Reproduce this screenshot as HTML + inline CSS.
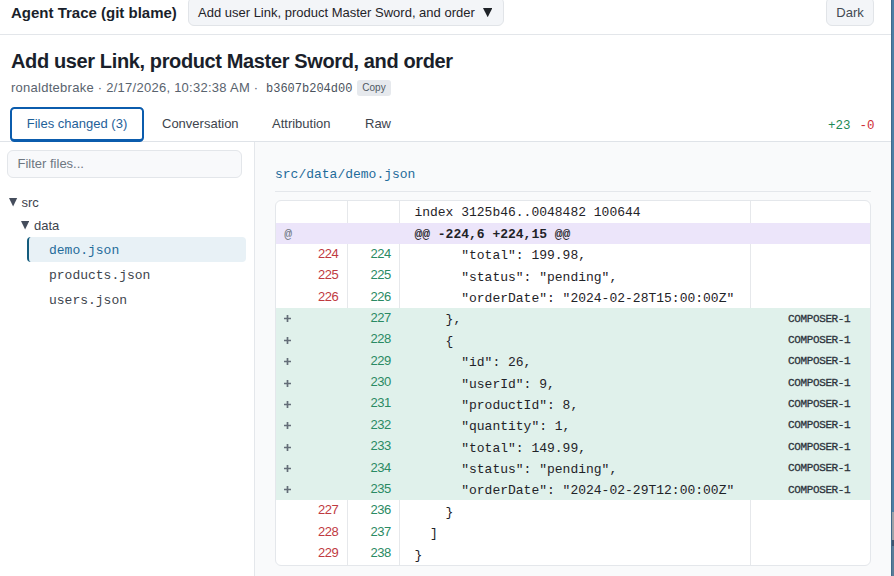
<!DOCTYPE html>
<html><head><meta charset="utf-8">
<style>
*{box-sizing:border-box;margin:0;padding:0}
html,body{width:894px;height:576px;overflow:hidden;background:#fff;font-family:"Liberation Sans",sans-serif;color:#1f2328}
.abs{position:absolute}
.mono{font-family:"Liberation Mono",monospace}
#strip{position:absolute;left:891px;top:0;width:3px;height:576px;border-left:1px solid #41698a;background:linear-gradient(#4d7fa5 0,#4d7fa5 512px,#9da2a7 512px,#9da2a7 540px,#41556e 540px,#41556e 546px,#5a7d98 546px)}
#hdr{position:absolute;left:0;top:0;width:891px;height:35px;border-bottom:1px solid #e3e6ea;background:#fff}
#brand{position:absolute;left:11px;top:1.6px;font-weight:bold;font-size:15px;line-height:22px;color:#1a1f2b}
#dd{position:absolute;left:188px;top:-3px;width:316px;height:28.6px;background:#f3f5f8;border:1px solid #e1e4e8;border-radius:6px;font-size:13px;line-height:27px;padding-top:1.3px;padding-left:9px;color:#1f2328}
#dark{position:absolute;left:826px;top:-3px;width:48px;height:28.6px;background:#f3f5f8;border:1px solid #e1e4e8;border-radius:6px;font-size:13px;line-height:27px;padding-top:1.3px;text-align:center;color:#424a53}
#title{position:absolute;left:11px;top:47.6px;font-weight:bold;font-size:20px;line-height:26px;letter-spacing:-0.375px;color:#1a1f2b}
#meta{position:absolute;left:11px;top:79.5px;font-size:13px;letter-spacing:0.26px;line-height:16px;color:#59636e;white-space:pre}
#hash{position:absolute;left:266px;top:80.5px;font-size:12px;line-height:16px;color:#4b535d}
#copy{position:absolute;left:357px;top:80px;width:34px;height:16px;background:#e6e9ed;border-radius:3px;font-size:10px;line-height:16px;text-align:center;color:#4f5862}
#tabs{position:absolute;left:0;top:107px;width:891px;height:35px;border-bottom:1px solid #dfe3e8}
.tab{position:absolute;top:0;height:35px;font-size:13px;line-height:33px;color:#3d444d}
#t1{left:10px;width:134px;border:2px solid #0b5cad;border-bottom-width:3px;border-radius:4.5px;color:#1f6199;text-align:center;line-height:30px}
#stats{position:absolute;left:828px;top:116px;font-size:12.5px;line-height:16px}
#side{position:absolute;left:0;top:142px;width:255px;height:434px;background:#fff;border-right:1px solid #e4e7eb}
#main{position:absolute;left:255px;top:142px;width:636px;height:434px;background:#f9fafb}

#filter{position:absolute;left:7px;top:150px;width:235px;height:28px;border:1px solid #e3e6ea;border-radius:6px;background:#f8f9fb;font-size:13px;line-height:26px;padding-left:9.5px;color:#6e7781}
.tri{position:absolute;font-size:11px;line-height:14px;color:#3d4650}
.tn{position:absolute;font-size:13px;line-height:16px;color:#3d444d}
#sel{position:absolute;left:27px;top:237px;width:219px;height:25px;background:#e8f1f6;border-left:2px solid #145c7d;border-radius:4px}
.fn{position:absolute;left:49px;font-size:13px;line-height:16px;color:#3d444d}
#path{position:absolute;left:275px;top:167px;font-size:13px;line-height:16px;color:#1f6b9a}
#pline{position:absolute;left:275px;top:191px;width:596px;height:1px;background:#e4e7eb}
#tbl{position:absolute;left:275px;top:200px;width:596px;height:366px;border:1px solid #e4e7eb;border-radius:6px;background:#fff;overflow:hidden}
.r{position:relative;height:21.33px;display:flex}
.r.add{height:21.38px}
.r.c2r{height:21.53px}
.r.idx{height:22px}
.r.hunk{height:21px;background:#ece5fa}
.r.add{background:#e0f1eb}
.r>div{height:100%}
.c1{width:72px;border-right:1px solid #e6e8eb;font-size:13px;letter-spacing:-0.45px;line-height:20.4px;padding-top:0;text-align:right;padding-right:8.6px;color:#bf3a3f}
.c2{width:52px;border-right:1px solid #e6e8eb;font-size:13px;letter-spacing:-0.45px;line-height:20.4px;padding-top:0;text-align:right;padding-right:8.1px;color:#2a8a63}
.c3{width:351px;border-right:1px solid #e6e8eb;font-family:"Liberation Mono",monospace;font-size:13px;line-height:21.4px;padding-left:14.4px;white-space:pre;color:#1f2328;padding-top:1.4px}
.c4{flex:1;position:relative}
.r.add>div,.r.hunk>div{border-right-color:transparent}
.c1.sym{text-align:left;padding-left:8.3px;color:#6e7781;font-family:"Liberation Mono",monospace;font-size:13px;letter-spacing:0;padding-top:1.6px;line-height:20px}
.r.hunk .c3{font-weight:bold}
.r.add .c1{font-weight:bold}
.cm{position:absolute;left:37px;top:0.6px;font-family:"Liberation Mono",monospace;font-size:11px;letter-spacing:-0.37px;line-height:21.4px;color:#2d333b;-webkit-text-stroke:0.3px #2d333b}
</style></head><body>
<div id="hdr">
  <div id="brand">Agent Trace (git blame)</div>
  <div id="dd">Add user Link, product Master Sword, and order <svg style="position:absolute;left:293.5px;top:10.1px" width="9.4" height="9.2" viewBox="0 0 9.4 9.2"><path d="M0 0H9.4L4.7 9.2Z" fill="#1f2328"/></svg></div>
  <div id="dark">Dark</div>
</div>
<div id="title">Add user Link, product Master Sword, and order</div>
<div id="meta">ronaldtebrake · 2/17/2026, 10:32:38 AM · </div>
<div id="hash" class="mono">b3607b204d00</div>
<div id="copy">Copy</div>
<div id="tabs">
  <div class="tab" id="t1">Files changed (3)</div>
  <div class="tab" style="left:162px">Conversation</div>
  <div class="tab" style="left:272px">Attribution</div>
  <div class="tab" style="left:365px">Raw</div>
  <div id="stats" class="mono" style="top:10.5px"><span style="color:#1f8a55">+23</span> <span style="color:#cf2f3a;margin-left:1.5px">-0</span></div>
</div>
<div id="main"></div>
<div id="side">
</div>
<div id="filter">Filter files...</div>
<svg class="abs" style="left:9.4px;top:198.1px" width="8.2" height="8.6" viewBox="0 0 8.2 8.6"><path d="M0 0H8.2L4.1 8.6Z" fill="#454d5c"/></svg><div class="tn" style="left:21.5px;top:195px">src</div>
<svg class="abs" style="left:21.3px;top:221px" width="8.2" height="8.6" viewBox="0 0 8.2 8.6"><path d="M0 0H8.2L4.1 8.6Z" fill="#454d5c"/></svg><div class="tn" style="left:34px;top:218px">data</div>
<div id="sel"></div>
<div class="fn mono" style="top:243px;color:#1f6b9a">demo.json</div>
<div class="fn mono" style="top:268px">products.json</div>
<div class="fn mono" style="top:293px">users.json</div>
<div id="path" class="mono">src/data/demo.json</div>
<div id="pline"></div>
<div id="tbl">
<div class="r idx"><div class="c1 on"></div><div class="c2"></div><div class="c3">index 3125b46..0048482 100644</div><div class="c4"></div></div>
<div class="r hunk"><div class="c1 sym">@</div><div class="c2"></div><div class="c3">@@ -224,6 +224,15 @@</div><div class="c4"></div></div>
<div class="r ctx"><div class="c1 on">224</div><div class="c2">224</div><div class="c3">      &quot;total&quot;: 199.98,</div><div class="c4"></div></div>
<div class="r ctx"><div class="c1 on">225</div><div class="c2">225</div><div class="c3">      &quot;status&quot;: &quot;pending&quot;,</div><div class="c4"></div></div>
<div class="r ctx"><div class="c1 on">226</div><div class="c2">226</div><div class="c3">      &quot;orderDate&quot;: &quot;2024-02-28T15:00:00Z&quot;</div><div class="c4"></div></div>
<div class="r add"><div class="c1 sym" style="position:relative"><svg style="position:absolute;left:8.4px;top:7.4px" width="7" height="7" viewBox="0 0 7 7"><path d="M3.5 0V7M0 3.5H7" stroke="#646e78" stroke-width="1.7"/></svg></div><div class="c2">227</div><div class="c3">    },</div><div class="c4"><span class="cm">COMPOSER-1</span></div></div>
<div class="r add"><div class="c1 sym" style="position:relative"><svg style="position:absolute;left:8.4px;top:7.4px" width="7" height="7" viewBox="0 0 7 7"><path d="M3.5 0V7M0 3.5H7" stroke="#646e78" stroke-width="1.7"/></svg></div><div class="c2">228</div><div class="c3">    {</div><div class="c4"><span class="cm">COMPOSER-1</span></div></div>
<div class="r add"><div class="c1 sym" style="position:relative"><svg style="position:absolute;left:8.4px;top:7.4px" width="7" height="7" viewBox="0 0 7 7"><path d="M3.5 0V7M0 3.5H7" stroke="#646e78" stroke-width="1.7"/></svg></div><div class="c2">229</div><div class="c3">      &quot;id&quot;: 26,</div><div class="c4"><span class="cm">COMPOSER-1</span></div></div>
<div class="r add"><div class="c1 sym" style="position:relative"><svg style="position:absolute;left:8.4px;top:7.4px" width="7" height="7" viewBox="0 0 7 7"><path d="M3.5 0V7M0 3.5H7" stroke="#646e78" stroke-width="1.7"/></svg></div><div class="c2">230</div><div class="c3">      &quot;userId&quot;: 9,</div><div class="c4"><span class="cm">COMPOSER-1</span></div></div>
<div class="r add"><div class="c1 sym" style="position:relative"><svg style="position:absolute;left:8.4px;top:7.4px" width="7" height="7" viewBox="0 0 7 7"><path d="M3.5 0V7M0 3.5H7" stroke="#646e78" stroke-width="1.7"/></svg></div><div class="c2">231</div><div class="c3">      &quot;productId&quot;: 8,</div><div class="c4"><span class="cm">COMPOSER-1</span></div></div>
<div class="r add"><div class="c1 sym" style="position:relative"><svg style="position:absolute;left:8.4px;top:7.4px" width="7" height="7" viewBox="0 0 7 7"><path d="M3.5 0V7M0 3.5H7" stroke="#646e78" stroke-width="1.7"/></svg></div><div class="c2">232</div><div class="c3">      &quot;quantity&quot;: 1,</div><div class="c4"><span class="cm">COMPOSER-1</span></div></div>
<div class="r add"><div class="c1 sym" style="position:relative"><svg style="position:absolute;left:8.4px;top:7.4px" width="7" height="7" viewBox="0 0 7 7"><path d="M3.5 0V7M0 3.5H7" stroke="#646e78" stroke-width="1.7"/></svg></div><div class="c2">233</div><div class="c3">      &quot;total&quot;: 149.99,</div><div class="c4"><span class="cm">COMPOSER-1</span></div></div>
<div class="r add"><div class="c1 sym" style="position:relative"><svg style="position:absolute;left:8.4px;top:7.4px" width="7" height="7" viewBox="0 0 7 7"><path d="M3.5 0V7M0 3.5H7" stroke="#646e78" stroke-width="1.7"/></svg></div><div class="c2">234</div><div class="c3">      &quot;status&quot;: &quot;pending&quot;,</div><div class="c4"><span class="cm">COMPOSER-1</span></div></div>
<div class="r add"><div class="c1 sym" style="position:relative"><svg style="position:absolute;left:8.4px;top:7.4px" width="7" height="7" viewBox="0 0 7 7"><path d="M3.5 0V7M0 3.5H7" stroke="#646e78" stroke-width="1.7"/></svg></div><div class="c2">235</div><div class="c3">      &quot;orderDate&quot;: &quot;2024-02-29T12:00:00Z&quot;</div><div class="c4"><span class="cm">COMPOSER-1</span></div></div>
<div class="r ctx c2r"><div class="c1 on">227</div><div class="c2">236</div><div class="c3">    }</div><div class="c4"></div></div>
<div class="r ctx c2r"><div class="c1 on">228</div><div class="c2">237</div><div class="c3">  ]</div><div class="c4"></div></div>
<div class="r ctx c2r"><div class="c1 on">229</div><div class="c2">238</div><div class="c3">}</div><div class="c4"></div></div>
</div>

<div id="strip"></div>
</body></html>
